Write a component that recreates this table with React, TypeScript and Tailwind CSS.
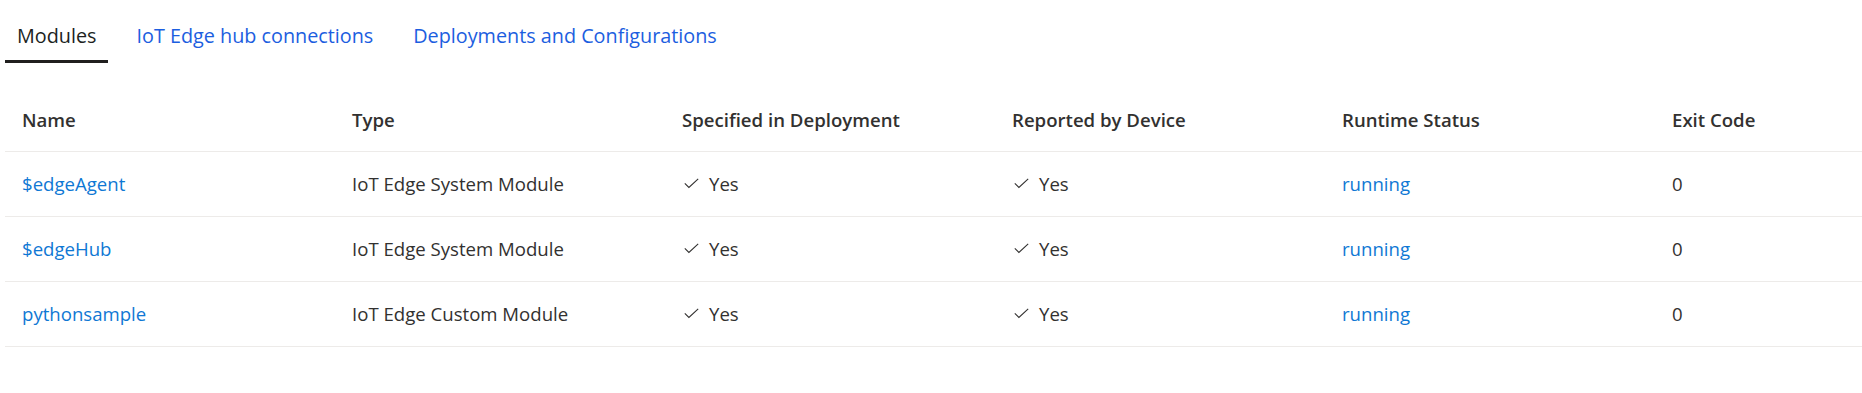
import React from "react";

const columns = [
	"Name",
	"Type",
	"Specified in Deployment",
	"Reported by Device",
	"Runtime Status",
	"Exit Code",
];

const modules = [
	{ name: "$edgeAgent", type: "IoT Edge System Module", status: "running", exit: "0" },
	{ name: "$edgeHub", type: "IoT Edge System Module", status: "running", exit: "0" },
	{ name: "pythonsample", type: "IoT Edge Custom Module", status: "running", exit: "0" },
];

const tabs = ["Modules", "IoT Edge hub connections", "Deployments and Configurations"];

function Check() {
	return (
		<svg width="15" height="11" viewBox="0 0 15 11" className="shrink-0">
			<polyline
				points="0.8,5.3 4.9,9.4 14.2,0.8"
				fill="none"
				stroke="#323130"
				strokeWidth="1.1"
			/>
		</svg>
	);
}

function YesCell() {
	return (
		<div className="flex items-center gap-[10px]">
			<Check />
			<span>Yes</span>
		</div>
	);
}

const row = "grid grid-cols-[330px_330px_330px_330px_330px_1fr] items-center";

export default function App() {
	return (
		<div className="w-[1862px] h-[393px] bg-white text-[#323130] font-['Segoe_UI','Open_Sans',sans-serif] overflow-hidden">
			{/* pivot tabs */}
			<div className="flex gap-4 pl-[5px] pt-[12px]">
				{tabs.map((t, i) => (
					<div key={t} className="flex flex-col">
						<div
							className={
								"px-3 h-[48px] flex items-center text-[19.8px] " +
								(i === 0 ? "text-[#201f1e]" : "text-[#1c5ee0]")
							}>
							{t}
						</div>
						<div className={"h-[3px] " + (i === 0 ? "bg-[#201f1e]" : "bg-transparent")} />
					</div>
				))}
			</div>

			{/* modules table */}
			<div className="ml-[5px] mt-[25px] text-[18.6px]">
				<div className={row + " h-[64px] border-b border-[#edebe9] font-semibold"}>
					{columns.map((c) => (
						<div key={c} className="pl-[17px]">
							{c}
						</div>
					))}
				</div>
				{modules.map((m) => (
					<div key={m.name} className={row + " h-[65px] border-b border-[#edebe9]"}>
						<div className="pl-[17px] text-[#0f78d4]">{m.name}</div>
						<div className="pl-[17px]">{m.type}</div>
						<div className="pl-[19px]">
							<YesCell />
						</div>
						<div className="pl-[19px]">
							<YesCell />
						</div>
						<div className="pl-[17px] text-[#0f78d4]">{m.status}</div>
						<div className="pl-[17px]">{m.exit}</div>
					</div>
				))}
			</div>
		</div>
	);
}
